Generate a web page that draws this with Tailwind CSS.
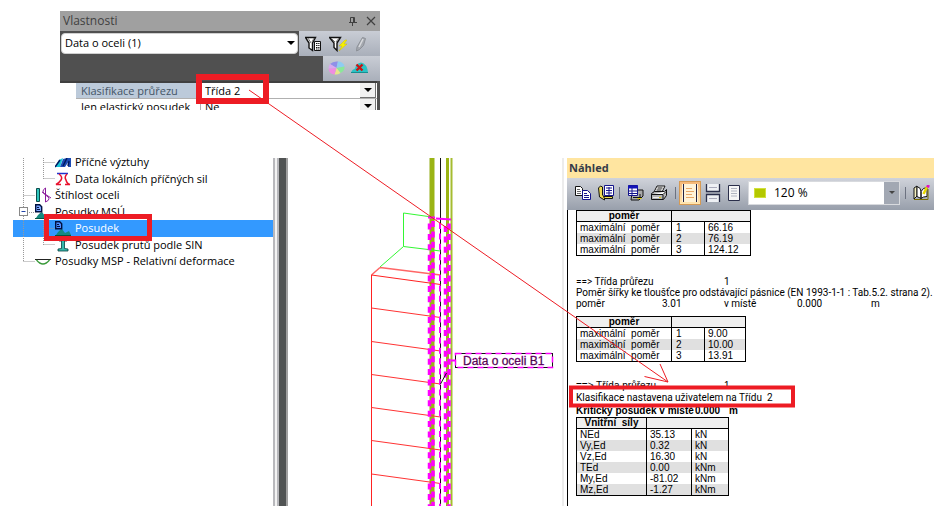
<!DOCTYPE html>
<html lang="cs">
<head>
  <meta charset="UTF-8" />
  <meta name="viewport" content="width=device-width, initial-scale=1.0" />
  <title>Klasifikace průřezu | Posudek oceli</title>
  <script src="https://cdn.jsdelivr.net/npm/@tailwindcss/browser@4"></script>
</head>
<body class="bg-white text-black font-['Open_Sans',sans-serif] text-[11px]">
  <main class="relative min-h-screen pt-[11px] pr-[7px] pb-[7px] overflow-hidden">

    <!-- Vlastnosti -->
    <section class="ml-[60px] w-80 bg-[#505050]">
      <header class="flex items-center justify-between h-5 pl-[3px] pr-1 bg-[#a0a0a0] text-[#404040]">
        <h2 class="text-[12px]">Vlastnosti</h2>
        <div class="flex gap-2">
          <button aria-label="Připnout"><svg class="w-2.5 h-2.5" viewBox="0 0 10 10" fill="none" stroke="#404040"><path d="M2.5 6V1.5h4V6M5.5 1.5V6M1 6.5h8M4.5 6.5V10" /></svg></button>
          <button aria-label="Zavřít"><svg class="w-2.5 h-2.5" viewBox="0 0 10 10" fill="none" stroke="#404040" stroke-width="1.2"><path d="M1 1l8 8M9 1l-8 8" /></svg></button>
        </div>
      </header>
      <div class="flex h-[25px]">
        <div class="relative flex-1 pl-px py-[2px] pr-px">
          <select aria-label="Výběr" class="appearance-none w-full h-[21px] px-[3px] rounded-sm border border-[#d0d0d0] bg-white text-[11px]"><option>Data o oceli (1)</option></select>
          <svg class="absolute right-1 top-[10px] w-2 h-1 pointer-events-none" viewBox="0 0 8 4"><path d="M0 0h8L4 4z" /></svg>
        </div>
        <div class="flex items-center w-[81px] pl-[6px] gap-2 bg-linear-to-b from-[#c9cdd5] to-[#a9afba]">
          <button aria-label="Filtr tabulky"><svg class="w-4 h-4" viewBox="0 0 16 16" fill="#fff" stroke="#111"><path d="M.5 1.500h10L7.500 7v7.500L4 12V7z" stroke-width="1.400" /><path d="M3 2l3 5M9 2L7 6" fill="none" stroke="#777" /><path d="M9.500 5.500h6v9h-6z" /><path d="M11 7.500h3.500M11 9.500h3.500M11 11.500h3.500M11 13h3.500" stroke-dasharray="1.500 .7" /></svg></button>
          <button aria-label="Rychlý filtr"><svg class="w-[18px] h-4" viewBox="0 0 18 16"><path d="M.5 1.500h11L8 7v7.500l-3-3V7z" fill="#fff" stroke="#111" stroke-width="1.400" /><path d="M2 2l4 4M10 2L7 6" stroke="#777" /><path d="M16 4l-6 6h3l-3 5 8-7h-3l3-4z" fill="#f6f000" stroke="#c8b800" stroke-width=".4" /></svg></button>
          <button aria-label="Upravit"><svg class="w-3 h-4" viewBox="0 0 12 16"><path d="M7.500 1.500l3 1-2 7-4 4-3 1.500.5-4z" fill="#a4a8af" stroke="#8c9097" /><path d="M8 3L4 11" stroke="#d8dade" stroke-width="1.500" /></svg></button>
        </div>
      </div>
      <div class="flex justify-end h-[25px]">
        <div class="flex items-center w-[57px] pl-[5px] pb-[2px] gap-[6px] bg-linear-to-b from-[#c9cdd5] to-[#a9afba]">
          <button aria-label="Barvy"><svg class="w-[17px] h-4" viewBox="0 0 17 16"><path d="M8.500 8L2 4Q5 1 10 1.500z" fill="#8f8fe8" /><path d="M8.500 8L10 1.500q5 0 6.500 5z" fill="#8ecdf2" /><path d="M8.500 8l8-1.500q.5 4-4 6.500z" fill="#8be79a" /><path d="M8.500 8l4 5q-3 2-6 1.500z" fill="#e7e68b" /><path d="M8.500 8l-2 6.500Q1 14 .5 8.500z" fill="#ee8de0" /><path d="M8.500 8L.5 8.500Q.5 6 2 4z" fill="#d9a8f0" /></svg></button>
          <button aria-label="Zrušit"><svg class="w-[17px] h-4" viewBox="0 0 17 16"><path d="M0 12.500q1-3 4-4 1-5 6-6 6 1 7 10z" fill="#2bc2c4" /><path d="M0 12.500h17" stroke="#159092" /><path d="M5.500 4.500l6 6M11.500 4.500l-6 6" stroke="#c81414" stroke-width="2.400" /></svg></button>
        </div>
      </div>
      <div class="mr-[3px] pl-4 h-[29px] overflow-hidden bg-white border-t-2 border-[#404040]">
        <div class="flex h-4 border-b border-[#b0b0b0]">
          <label for="trida" class="w-[125px] pl-[5px] bg-[#bccada] text-[#445566] border-r border-[#b0b0b0]">Klasifikace průřezu</label>
          <div class="relative flex-1">
            <select id="trida" class="appearance-none block w-full h-[15px] pl-1 text-[11px] leading-[15px]"><option>Třída 2</option></select>
            <span class="absolute right-px top-0 flex items-center justify-center w-4 h-[15px] bg-[#f0f0f0] border-r border-b border-[#707070] pointer-events-none"><svg class="w-2 h-1" viewBox="0 0 8 4"><path d="M0 0h8L4 4z" /></svg></span>
          </div>
        </div>
        <div class="flex h-4">
          <label for="elasticky" class="w-[125px] pl-[5px] border-r border-[#b0b0b0]">Jen elastický posudek</label>
          <div class="relative flex-1">
            <select id="elasticky" class="appearance-none block w-full h-[15px] pl-1 text-[11px] leading-[15px]"><option>Ne</option></select>
            <span class="absolute right-px top-0 flex items-center justify-center w-4 h-[15px] bg-[#f0f0f0] border-r border-b border-[#707070] pointer-events-none"><svg class="w-2 h-1" viewBox="0 0 8 4"><path d="M0 0h8L4 4z" /></svg></span>
          </div>
        </div>
      </div>
    </section>

    <div class="flex mt-12 h-[348px] overflow-hidden">
      <!-- Strom -->
      <nav class="relative ml-[13px] w-[260px] h-full overflow-hidden">
        <ul class="grid grid-rows-7 h-[116px] -mt-1">
          <li class="grid"><a href="#" class="flex items-center gap-1 pl-[42px]"><svg class="w-4 h-4" viewBox="0 0 16 16"><path d="M0 13L4 6l4-2-3 9z" fill="#19c5d8" /><path d="M5 13l3-8 4-1h4v9h-3l1-6-4 6z" fill="#1c4bb5" /><path d="M0 13L5 6M8 12l4-8M13 12l1-5" stroke="#001a60" stroke-width="1.500" /></svg>Příčné výztuhy</a></li>
          <li class="grid"><a href="#" class="flex items-center gap-1 pl-[42px]"><svg class="w-4 h-4" viewBox="0 0 16 16" fill="none" stroke-width="1.500"><path d="M2 2.500h11" stroke="#2233cc" /><path d="M4 3q4 3 2 6-2 3-5 4.500h5M12 3q-3 3-1 6 1 4 4 4.500h-5" stroke="#e8112d" /></svg>Data lokálních příčných sil</a></li>
          <li class="grid"><a href="#" class="flex items-center gap-1 pl-[22px]"><svg class="w-4 h-4" viewBox="0 0 16 16"><path d="M1.500 1.500h3v13h-3z" fill="#2fc6bd" stroke="#0b4b4b" /><path d="M10.500 1v14M10.500 1q-5 3 0 7 7 4 0 7M7 5l9 6" fill="none" stroke="#8a1a9b" /></svg>Štíhlost oceli</a></li>
          <li class="grid"><a href="#" class="flex items-center gap-1 pl-[22px]"><svg class="w-4 h-4" viewBox="0 0 16 16"><path d="M1 14q3-5 6-6l3 4 4-2 2 4z" fill="#148a80" /><path d="M.7.7h4l2 2v5h-6z" fill="#7da7ff" stroke="#001040" stroke-width="1.400" /><path d="M2 3.500h2M2 5.500h3" stroke="#001040" /><path d="M0 14.500h16" stroke="#054" /></svg>Posudky MSÚ</a></li>
          <li class="grid"><a href="#" aria-current="true" class="flex items-center gap-1 pl-[42px] bg-[#3399ff] text-white"><svg class="w-4 h-4" viewBox="0 0 16 16"><path d="M1 14q3-5 6-6l3 4 4-2 2 4z" fill="#148a80" /><path d="M.7.7h4l2 2v5h-6z" fill="#4c8cff" stroke="#001040" stroke-width="1.400" /><path d="M2 3.500h2M2 5.500h3" stroke="#001040" /><path d="M0 14.500h16" stroke="#054" /></svg>Posudek</a></li>
          <li class="grid"><a href="#" class="flex items-center gap-1 pl-[42px]"><svg class="w-4 h-4" viewBox="0 0 16 16"><path d="M4 2h8v2H9.500v7.500L13 12v2H3v-2l3.500-.5V4H4z" fill="#35b8ac" stroke="#053f3f" stroke-width=".8" /></svg>Posudek prutů podle SIN</a></li>
          <li class="grid"><a href="#" class="flex items-center gap-1 pl-[22px]"><svg class="w-4 h-4" viewBox="0 0 16 16" fill="none"><path d="M0 5.500h16" stroke="#222" /><path d="M1.500 6Q8 14 14.500 6" stroke="#3a9a3a" stroke-width="1.300" /></svg>Posudky MSP - Relativní deformace</a></li>
        </ul>
        <svg class="absolute left-0 top-0 w-14 h-28 pointer-events-none" viewBox="0 0 56 112" fill="none" stroke="#999" stroke-dasharray="1 1">
          <path d="M10.500 0v104M10.500 37.500H22M16 54.500h6M10.500 103.500H22M30.500 0v21M30.500 4.500H42M30.500 20.500H42M30.500 62v25M30.500 70.500H42M30.500 86.500H42" />
          <rect x="6.500" y="49.500" width="8" height="8" fill="#fff" stroke="#888" stroke-dasharray="none" />
          <path d="M8.500 53.500h4" stroke="#2244aa" stroke-dasharray="none" />
        </svg>
      </nav>

      <div class="flex w-4">
        <div class="w-[6px] bg-[#f3f3f3] border-x-2 border-[#b8b8bc]"></div>
        <div class="w-[9px] bg-[#505353] border-r-2 border-[#a0a0a0]"></div>
      </div>

      <!-- Průběh na prutu -->
      <svg class="w-[273px] h-[348px] shrink-0" viewBox="289 158 273 348" fill="none">
        <path d="M432 158v348" stroke="#9ab414" stroke-width="5" />
        <path d="M429.500 158v348" stroke="#c9d68c" />
        <path d="M447.500 158v348" stroke="#9ab414" stroke-width="3" />
        <path d="M451.500 158v348" stroke="#a5bc30" stroke-width="2" />
        <path d="M440.500 158v348" stroke="#111" />
        <path d="M432 217l-28.500-4v33.500l37 4.500M403.500 246.500L380 267" stroke="#33f733" />
        <path d="M380 267.500l60.500 7.500M380 267.500l-8.500 7.500" stroke="#f66" stroke-width="1.500" />
        <path d="M440.500 284.500L371.500 275v231" stroke="#f22" />
        <path d="M371.500 308l69 9.500M371.500 341.500l69 9.500M371.500 374.500l69 9.500M371.500 407.500l69 9.500M371.500 440.500l69 9.500M371.500 474l69 9.500" stroke="#f33" />
        <path d="M428 217.500h7M436 218.500l15 1" stroke="#f0f" stroke-width="2" />
        <g stroke="#f0f" stroke-width="3.500" stroke-dasharray="6 4.400">
          <path d="M429.500 223.500v282.500M445.500 226v280" />
          <path d="M433 221v285M449 223.500v282.500" />
          <path d="M440 223v283" stroke-width="2" />
        </g>
        <path d="M440.500 384l6-11" stroke="#111" />
        <path d="M451 360.500h4" stroke="#f0f" stroke-width="2" />
        <rect x="455.500" y="353.500" width="97" height="14" fill="#fff" stroke="#111" />
        <rect x="455.500" y="353.500" width="97" height="14" stroke="#f0f" stroke-width="1.500" stroke-dasharray="6 4" />
        <text x="463" y="364.500" font-family="Liberation Sans, sans-serif" font-size="12" fill="#111" stroke="#a0a" stroke-width=".3">Data o oceli B1</text>
      </svg>

      <!-- Náhled -->
      <section class="flex-1 min-w-0 pl-[3px] border-l-2 border-[#ececec]">
        <h2 class="h-5 pl-[2px] bg-[#ffe5a0] text-[11px] leading-5 font-bold text-[#333a48]">Náhled</h2>
        <div class="flex items-center h-8 pl-2 pb-[3px] bg-linear-to-b from-[#d0d3da] to-[#989fab]">
          <button aria-label="Kopírovat" class="mr-[7px]"><svg class="w-4 h-4" viewBox="0 0 16 16" fill="#fff" stroke="#111"><path d="M.5 1.500h5l2 2v7h-7z" /><path d="M2 4.500h3M2 6.500h4M2 8.500h4" stroke="#666" /><path d="M7.500 5.500h5l3 3v6h-8z" stroke="#14148c" /><path d="M9 8.500h3M9 10.500h5M9 12.500h5" stroke="#14148c" /></svg></button>
          <button aria-label="Dokument" class="mr-1"><svg class="w-[17px] h-4" viewBox="0 0 17 16" fill="#fff" stroke="#111"><path d="M.5 3l2-2 2 1v8l2 2v3l-5-3z" fill="#f0dc50" /><path d="M6.500.5h9v10h-9z" stroke="#14148c" /><path d="M8 3h6M8 5.500h6M8 8h6M11 2v8" stroke="#14148c" /><path d="M5.500 11.500h9v2h-8z" fill="#f0dc50" /></svg></button>
          <span class="w-px h-3 mr-[7px] bg-[#6c7280]"></span>
          <button aria-label="Tisk tabulky" class="mr-[6px]"><svg class="w-[17px] h-4" viewBox="0 0 17 16" fill="#fff" stroke="#111"><path d="M5 8l3-3h8v6l-4 4H4z" fill="#aaa" /><path d="M6 12.500h9M13 9v4" /><path d="M1.500.5h9v10h-9z" stroke="#14148c" /><path d="M1 2h10" stroke="#1414b8" stroke-width="3" /><path d="M2 6h8M2 8.500h8M5 3v7" stroke="#14148c" /><path d="M10.500 13.500h4" stroke="#e6d200" /></svg></button>
          <button aria-label="Tisk" class="mr-[7px]"><svg class="w-[18px] h-4" viewBox="0 0 18 16" fill="#fff" stroke="#111"><path d="M4 7l3-6h8l-3 6z" /><path d="M7.500 3h5M6.500 5h5" /><path d="M1.500 8.500l3-2h10l2-2v6l-3 4h-12z" fill="#b4b4b4" /><path d="M1.500 9.500h11.500l3-3M13 10v4" /><path d="M3 12.500h8" stroke="#eee" /><path d="M9 12.500h2" stroke="#e6d200" /></svg></button>
          <span class="w-px h-3 mr-[3px] bg-[#6c7280]"></span>
          <button aria-label="Stránka" class="flex items-center justify-center w-[22px] h-6 mr-1 border border-[#d69a54] bg-linear-to-b from-[#f5b878] to-[#ffe6b0]"><svg class="w-4 h-[18px]" viewBox="0 0 16 18"><path d="M0 0h16v18H0z" fill="#fff3d8" /><path d="M1.500 0v18M14.500 0v18" stroke="#224" /><path d="M4 4.500h6M4 7.500h8M4 10.500h6M4 13.500h8" stroke="#e8a868" /></svg></button>
          <button aria-label="Zalomení" class="mr-[7px]"><svg class="w-4 h-[18px]" viewBox="0 0 16 18"><path d="M1 0h14v7H1zM1 11h14v7H1z" fill="#eef0f4" /><path d="M1.500 0v7.500h13V0M1.500 18v-7.500h13V18" fill="none" stroke="#2a2e4a" stroke-width="1.300" /><path d="M4 3.500h8M4 14.500h8" stroke="#aab" /></svg></button>
          <button aria-label="Celá strana" class="mr-2"><svg class="w-3 h-4" viewBox="0 0 12 16"><path d="M.5.5h11v15H.5z" fill="#f5f5f5" stroke="#2a2e4a" /><path d="M3 3.500h6M3 6h6M3 8.500h6M3 11h6" stroke="#b0b4c0" /></svg></button>
          <div class="relative flex-1 min-w-0">
            <select aria-label="Měřítko" class="appearance-none block w-full h-6 pl-[25px] bg-white border border-[#d8dade] text-[12px]"><option>120 %</option></select>
            <span class="absolute left-[6px] top-[7px] w-3 h-2.5 bg-[#b4c800] border border-[#d2e03c] pointer-events-none"></span>
            <span class="absolute right-px top-px flex items-center justify-center w-[15px] h-[22px] bg-[#a2a8b3] pointer-events-none"><svg class="w-[6px] h-[3px]" viewBox="0 0 6 3"><path d="M0 0h6L3 3z" fill="#444" /></svg></span>
          </div>
          <span class="w-px h-3 ml-[5px] mr-[7px] bg-[#6c7280]"></span>
          <button aria-label="Upravit dokument" class="mr-1"><svg class="w-[17px] h-4" viewBox="0 0 17 16" fill="#fff" stroke="#111"><path d="M1 3l3-2v10l-3 3z" fill="#f4f0c0" /><path d="M4 1.500q4 1 4 5v7l-4-2zM8 6.500q2-4 6-4v9q-4 0-6 2z" /><path d="M1 14.500h14V4" fill="none" stroke="#7a6c00" /><path d="M14 2l-3.500 7" stroke="#e8d800" stroke-width="2.500" /><path d="M15.500 0l-1 2.500" stroke="#e010c0" stroke-width="3" /></svg></button>
        </div>

        <div class="h-[296px] pl-2 border-l border-black font-['Liberation_Sans',sans-serif] text-[10px] leading-[11px] whitespace-nowrap">
          <table class="table-fixed w-[175px] border-collapse border border-black">
            <colgroup><col class="w-[95px]" /><col class="w-[33px]" /><col /></colgroup>
            <thead><tr class="bg-[#efefef] border-b border-black"><th class="p-0 leading-[10px] border-r border-black">poměr</th><th class="p-0" colspan="2"></th></tr></thead>
            <tbody>
              <tr><td class="p-0 pl-[3px] border-r border-black">maximální&nbsp; poměr</td><td class="p-0 pl-1 border-r border-black">1</td><td class="p-0 pl-[3px]">66.16</td></tr>
              <tr class="bg-[#e0e0e0]"><td class="p-0 pl-[3px] border-r border-black">maximální&nbsp; poměr</td><td class="p-0 pl-1 border-r border-black">2</td><td class="p-0 pl-[3px]">76.19</td></tr>
              <tr><td class="p-0 pl-[3px] border-r border-black">maximální&nbsp; poměr</td><td class="p-0 pl-1 border-r border-black">3</td><td class="p-0 pl-[3px]">124.12</td></tr>
            </tbody>
          </table>

          <div class="mt-5 font-['Roboto',sans-serif]">
            <p class="flex"><span class="w-[148px]">==&gt; Třída průřezu</span><span>1</span></p>
            <p>Poměr šířky ke tloušťce pro odstávající pásnice (EN 1993-1-1 : Tab.5.2. strana 2).</p>
            <p class="flex"><span class="w-[86px]">poměr</span><span class="w-[62px]">3.01</span><span class="w-[73px]">v místě</span><span class="w-[74px]">0.000</span><span>m</span></p>
          </div>

          <table class="mt-[7px] table-fixed w-[170px] border-collapse border border-black">
            <colgroup><col class="w-[95px]" /><col class="w-[33px]" /><col /></colgroup>
            <thead><tr class="bg-[#efefef] border-b border-black"><th class="p-0 leading-[10px] border-r border-black">poměr</th><th class="p-0" colspan="2"></th></tr></thead>
            <tbody>
              <tr><td class="p-0 pl-[3px] border-r border-black">maximální&nbsp; poměr</td><td class="p-0 pl-1 border-r border-black">1</td><td class="p-0 pl-[3px]">9.00</td></tr>
              <tr class="bg-[#e0e0e0]"><td class="p-0 pl-[3px] border-r border-black">maximální&nbsp; poměr</td><td class="p-0 pl-1 border-r border-black">2</td><td class="p-0 pl-[3px]">10.00</td></tr>
              <tr><td class="p-0 pl-[3px] border-r border-black">maximální&nbsp; poměr</td><td class="p-0 pl-1 border-r border-black">3</td><td class="p-0 pl-[3px]">13.91</td></tr>
            </tbody>
          </table>

          <div class="mt-[18px]">
            <p class="flex"><span class="w-[148px]">==&gt; Třída průřezu</span><span>1</span></p>
            <p class="font-['Roboto',sans-serif] leading-[13px]">Klasifikace nastavena uživatelem na Třídu&nbsp; 2</p>
            <p class="flex font-bold leading-[13px]"><span class="w-[119px]">Kritický posudek v místě</span><span class="w-[34px]">0.000</span><span>m</span></p>
          </div>

          <table class="table-fixed w-[153px] border-collapse border border-black">
            <colgroup><col class="w-[70px]" /><col class="w-[45px]" /><col /></colgroup>
            <thead><tr class="bg-[#efefef] border-b border-black"><th class="p-0 leading-[10px] border-r border-black">Vnitřní&nbsp; síly</th><th class="p-0" colspan="2"></th></tr></thead>
            <tbody>
              <tr><td class="p-0 pl-[3px] border-r border-black">NEd</td><td class="p-0 pl-[3px] border-r border-black">35.13</td><td class="p-0 pl-[3px]">kN</td></tr>
              <tr class="bg-[#e0e0e0]"><td class="p-0 pl-[3px] border-r border-black">Vy,Ed</td><td class="p-0 pl-[3px] border-r border-black">0.32</td><td class="p-0 pl-[3px]">kN</td></tr>
              <tr><td class="p-0 pl-[3px] border-r border-black">Vz,Ed</td><td class="p-0 pl-[3px] border-r border-black">16.30</td><td class="p-0 pl-[3px]">kN</td></tr>
              <tr class="bg-[#e0e0e0]"><td class="p-0 pl-[3px] border-r border-black">TEd</td><td class="p-0 pl-[3px] border-r border-black">0.00</td><td class="p-0 pl-[3px]">kNm</td></tr>
              <tr><td class="p-0 pl-[3px] border-r border-black">My,Ed</td><td class="p-0 pl-[3px] border-r border-black">-81.02</td><td class="p-0 pl-[3px]">kNm</td></tr>
              <tr class="bg-[#e0e0e0]"><td class="p-0 pl-[3px] border-r border-black">Mz,Ed</td><td class="p-0 pl-[3px] border-r border-black">-1.27</td><td class="p-0 pl-[3px]">kNm</td></tr>
            </tbody>
          </table>
        </div>
      </section>
    </div>

    <!-- červené rámečky a šipka -->
    <svg class="absolute left-0 top-0 w-[941px] h-[513px] pointer-events-none" viewBox="0 0 941 513" fill="none" stroke="#ed1c24">
      <rect x="199" y="77" width="67" height="24" stroke-width="6" />
      <rect x="46.500" y="216.500" width="103" height="22" stroke-width="5" />
      <rect x="571" y="387.500" width="222" height="18" stroke-width="4" />
      <path d="M249 90l419 292M644.500 376.500L668 382l-8-18" />
    </svg>
  </main>
</body>
</html>
